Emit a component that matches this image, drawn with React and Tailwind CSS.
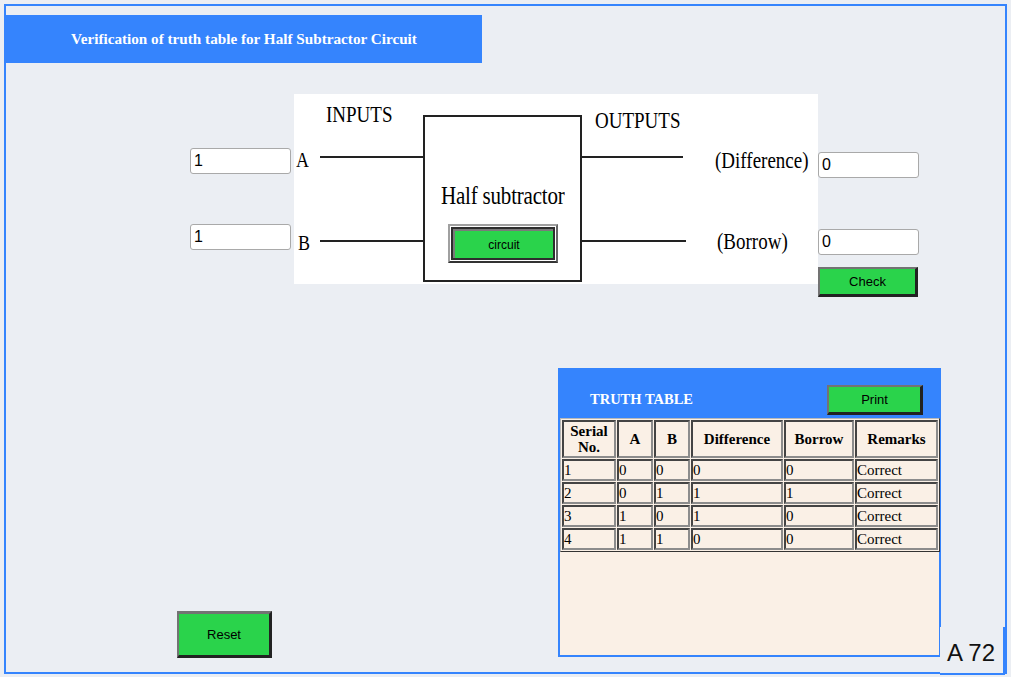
import React from 'react';

// Half subtractor truth table verification page

const serif = "font-['Liberation_Serif','Times_New_Roman',serif]";
const sans = "font-['Liberation_Sans',Arial,sans-serif]";

const rows = [
  ['1', '0', '0', '0', '0', 'Correct'],
  ['2', '0', '1', '1', '1', 'Correct'],
  ['3', '1', '0', '1', '0', 'Correct'],
  ['4', '1', '1', '0', '0', 'Correct'],
];

const ValueBox = ({ value, className = '' }) => (
  <input
    readOnly
    value={value}
    className={`block h-[26px] w-[101px] rounded-[3px] border border-[#a9a9a9] bg-white pl-[3px] text-[16px] text-black outline-none ${sans} ${className}`}
  />
);

const GreenButton = ({ children, className = '' }) => (
  <button
    className={`flex items-center justify-center border-t-2 border-l-2 border-r-[3px] border-b-[3px] border-t-[#737373] border-l-[#737373] border-r-[#222] border-b-[#222] bg-[#2ad34b] text-[13px] text-black ${sans} ${className}`}
  >
    {children}
  </button>
);

// labels in the drawing are slightly stretched vertically, like the original image
const Label = ({ className, children }) => (
  <span className={`absolute origin-center scale-y-[1.18] leading-none ${className}`}>{children}</span>
);

const Diagram = () => (
  <div className={`relative h-[190px] w-[524px] bg-white text-black ${serif}`}>
    <Label className="left-[32px] top-[11px] text-[19px]">INPUTS</Label>
    <Label className="left-[301px] top-[17px] text-[19px]">OUTPUTS</Label>

    <Label className="left-[2px] top-[57px] text-[18px]">A</Label>
    <Label className="left-[4px] top-[140px] text-[18px]">B</Label>

    {/* wires */}
    <div className="absolute left-[26px] top-[62px] h-[2px] w-[103px] bg-[#222]" />
    <div className="absolute left-[26px] top-[146px] h-[2px] w-[103px] bg-[#222]" />
    <div className="absolute left-[288px] top-[62px] h-[2px] w-[101px] bg-[#222]" />
    <div className="absolute left-[288px] top-[146px] h-[2px] w-[104px] bg-[#222]" />

    {/* block */}
    <div className="absolute left-[129px] top-[21px] h-[167px] w-[159px] border-2 border-[#222]" />
    <Label className="left-[147px] top-[92px] text-[21px] tracking-[-0.2px]">Half subtractor</Label>

    <div className="absolute left-[154px] top-[130px] h-[39px] w-[110px] border-2 border-t-[#a0a0a0] border-l-[#a0a0a0] border-r-[#666] border-b-[#333] bg-white p-px">
      <div className="h-full w-full border-2 border-[#2e2e2e]">
        <div className={`flex h-full w-full items-center justify-center border-t-2 border-l-2 border-[#7a7a7a] bg-[#2ad34b] text-[12px] ${sans}`}>
          circuit
        </div>
      </div>
    </div>

    <Label className="left-[421px] top-[57px] text-[19px]">(Difference)</Label>
    <Label className="left-[423px] top-[138px] text-[19px]">(Borrow)</Label>
  </div>
);

const TruthTable = () => (
  <div className="flex h-[289px] w-[383px] flex-col border-2 border-[#3584fd] bg-[#faf0e6]">
    <div className="flex h-[48px] items-start justify-between bg-[#3584fd] pl-[30px] pr-[16px]">
      <span className={`mt-[22px] text-[14.5px] font-bold leading-none text-white ${serif}`}>TRUTH TABLE</span>
      <GreenButton className="mt-[15px] h-[30px] w-[96px] text-[13px]">Print</GreenButton>
    </div>
    <table className={`w-[380px] table-fixed border-separate border-spacing-[1px] border border-t-[#b8b8b8] border-l-[#b8b8b8] border-r-[#333] border-b-[#333] text-black ${serif}`}>
      <colgroup>
        <col className="w-[54px]" />
        <col className="w-[36px]" />
        <col className="w-[36px]" />
        <col className="w-[92px]" />
        <col className="w-[70px]" />
        <col className="w-[83px]" />
      </colgroup>
      <thead>
        <tr className="h-[38px]">
          {['Serial No.', 'A', 'B', 'Difference', 'Borrow', 'Remarks'].map((h) => (
            <th
              key={h}
              className="border-2 border-t-[#444] border-l-[#444] border-r-[#8c8c8c] border-b-[#8c8c8c] px-0 text-center text-[15px] font-bold leading-[16px]"
            >
              {h === 'Serial No.' ? (
                <>
                  Serial
                  <br />
                  No.
                </>
              ) : (
                h
              )}
            </th>
          ))}
        </tr>
      </thead>
      <tbody>
        {rows.map((r) => (
          <tr key={r[0]} className="h-[22px]">
            {r.map((c, i) => (
              <td
                key={i}
                className="border-2 border-t-[#444] border-l-[#444] border-r-[#8c8c8c] border-b-[#8c8c8c] p-0 text-left text-[15px] leading-[17px]"
              >
                {c}
              </td>
            ))}
          </tr>
        ))}
      </tbody>
    </table>
  </div>
);

export default function App() {
  return (
    <div className="relative h-[677px] w-[1011px] overflow-hidden bg-[#ebeef3] p-[4px]">
      <div className="h-[670px] w-[1003px] border-2 border-[#3584fd]">
        {/* title banner */}
        <div className={`mt-[9px] flex h-[48px] w-[476px] items-center justify-center bg-[#3584fd] text-[15.2px] font-bold text-white ${serif}`}>
          Verification of truth table for Half Subtractor Circuit
        </div>

        {/* circuit row */}
        <div className="mt-[31px] flex pl-[184px]">
          <div className="flex w-[101px] flex-col pt-[54px]">
            <ValueBox value="1" />
            <ValueBox value="1" className="mt-[50px]" />
          </div>
          <div className="ml-[3px]">
            <Diagram />
          </div>
          <div className="flex flex-col pt-[58px]">
            <ValueBox value="0" />
            <ValueBox value="0" className="mt-[51px]" />
            <GreenButton className="mt-[12px] h-[30px] w-[100px]">Check</GreenButton>
          </div>
        </div>

        {/* bottom row */}
        <div className="mt-[71px] flex items-start pl-[171px]">
          <GreenButton className="mt-[243px] h-[47px] w-[95px] border-t-[3px]">Reset</GreenButton>
          <div className="ml-[286px]">
            <TruthTable />
          </div>
        </div>
      </div>

      {/* page badge */}
      <div className="absolute left-[940px] top-[627px] flex h-[48px] w-[65px] items-end border-r-2 border-b-2 border-[#3584fd] bg-[#ebeef3] pb-[8px] pl-[7px]">
        <span className={`text-[24px] leading-none text-[#111] ${sans}`}>A 72</span>
      </div>
    </div>
  );
}
